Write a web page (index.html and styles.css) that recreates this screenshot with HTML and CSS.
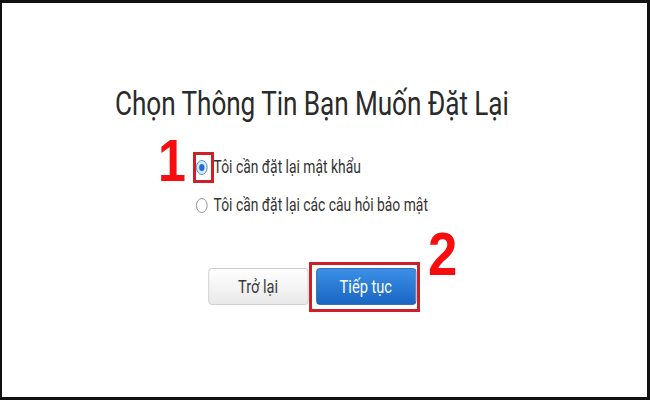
FILE: index.html
```html
<!DOCTYPE html>
<html lang="vi">
<head>
<meta charset="utf-8">
<title>Chọn Thông Tin Bạn Muốn Đặt Lại</title>
<link rel="stylesheet" href="styles.css">
</head>
<body>
<div class="frame">
  <div class="stage">
    <h1 class="title">Chọn Thông Tin Bạn Muốn Đặt Lại</h1>
    <div class="options">
      <label class="option">
        <span class="radio checked"></span>
        <span class="option-text">Tôi cần đặt lại mật khẩu</span>
      </label>
      <label class="option">
        <span class="radio"></span>
        <span class="option-text">Tôi cần đặt lại các câu hỏi bảo mật</span>
      </label>
    </div>
    <div class="buttons">
      <button class="btn btn-back">Trở lại</button>
      <button class="btn btn-next">Tiếp tục</button>
    </div>
  </div>
  <span class="mark mark-1">1</span>
  <span class="mark mark-2">2</span>
  <span class="box box-radio"></span>
  <span class="box box-next"></span>
</div>
</body>
</html>
```
FILE: styles.css
```css
html, body {
  margin: 0;
  padding: 0;
  background: #111;
}

.frame {
  position: relative;
  width: 650px;
  height: 400px;
  box-sizing: border-box;
  border-style: solid;
  border-color: #111;
  border-width: 3px 3px 3px 2px;
  background: #fff;
  overflow: hidden;
}

.stage {
  width: 838px;
  box-sizing: border-box;
  padding: 80px 33px 0 0;
  display: flex;
  flex-direction: column;
  align-items: center;
  transform: scaleX(0.77);
  transform-origin: 0 0;
  font-family: Roboto, "Liberation Sans", sans-serif;
  color: #333;
}

.title {
  margin: 0;
  font-size: 34px;
  line-height: 40px;
  font-weight: 400;
  letter-spacing: -0.1px;
  color: #2a2a2a;
  white-space: nowrap;
}

.options {
  margin-top: 34px;
  display: flex;
  flex-direction: column;
  align-items: flex-start;
  gap: 18px;
}

.option {
  display: flex;
  align-items: center;
  gap: 8px;
  height: 20px;
  font-size: 18px;
  line-height: 20px;
  color: #333;
  white-space: nowrap;
}

.radio {
  width: 13px;
  height: 13px;
  border: 1px solid #8a8a8a;
  border-radius: 50%;
  background: #fff;
  display: flex;
  align-items: center;
  justify-content: center;
  flex: none;
}

.radio.checked {
  border-color: #3f86d8;
  background: #dbe9fa;
}

.radio.checked::after {
  content: "";
  width: 7px;
  height: 7px;
  border-radius: 50%;
  background: #1f6fd6;
}

.buttons {
  margin-top: 53px;
  display: flex;
  gap: 10px;
}

.btn {
  width: 130px;
  height: 37px;
  box-sizing: border-box;
  border-radius: 4px;
  font-family: Roboto, "Liberation Sans", sans-serif;
  font-size: 19px;
  padding: 0;
}

.btn-back {
  border: 1px solid #c9c9c9;
  background: linear-gradient(#ffffff, #e9e9e9);
  color: #3a3a3a;
}

.btn-next {
  border: 1px solid #1b5fb0;
  background: linear-gradient(#3b8fe6, #1a66c3);
  color: #fff;
}

.mark {
  position: absolute;
  font-family: "Liberation Sans", Arial, sans-serif;
  font-weight: 700;
  color: #f70d0d;
  transform: scaleX(0.85);
  transform-origin: 0 0;
}

.mark-1 {
  left: 156px;
  top: 129px;
  font-size: 59px;
  line-height: 59px;
}

.mark-2 {
  left: 426px;
  top: 220px;
  font-size: 62px;
  line-height: 62px;
}

.box {
  position: absolute;
  box-sizing: border-box;
  border: 3px solid #cf1f2a;
}

.box-radio {
  left: 191px;
  top: 149px;
  width: 21px;
  height: 31px;
}

.box-next {
  left: 307px;
  top: 259px;
  width: 111px;
  height: 50px;
}
```
